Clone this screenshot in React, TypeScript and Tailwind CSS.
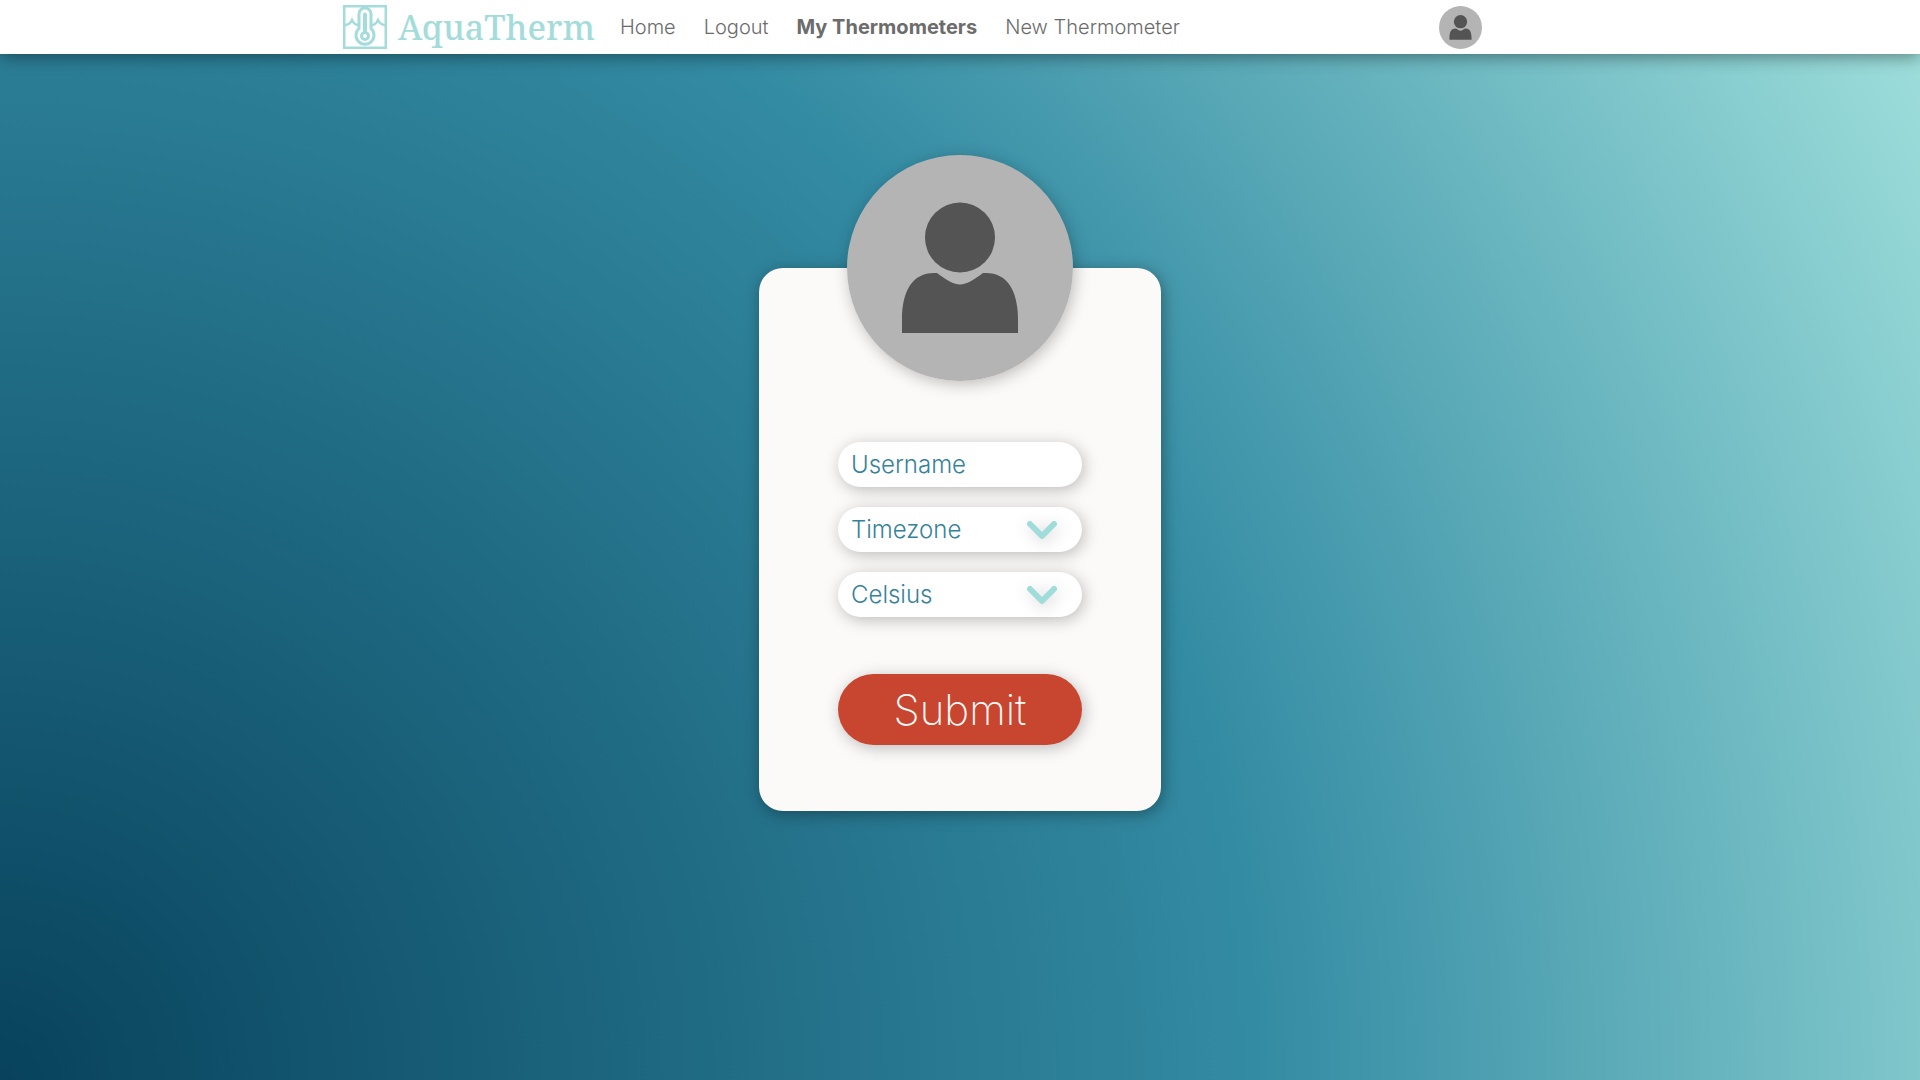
import React from 'react';

function Avatar({ className }: { className: string }) {
  return (
    <svg viewBox="0 0 226 226" className={className} role="img" aria-label="Profile picture">
      <circle cx="113" cy="113" r="113" fill="#b4b4b4" />
      <circle cx="113" cy="82.500" r="35" fill="#545454" />
      <path
        d="M55 178V165C55 135 66 118 87 118L90 118C98 124 106 129.500 113 129.500S128 124 136 118L139 118C160 118 171 135 171 165V178Z"
        fill="#545454"
      />
    </svg>
  );
}

function LogoMark() {
  return (
    <svg viewBox="0 0 44 44" className="h-11 w-11" fill="none" stroke="#a3dcda" strokeWidth="2.500" aria-hidden="true">
      <rect x="1.250" y="1.250" width="41.500" height="41.500" />
      <path d="M2 20C5 20 7.500 18 9 15C10.500 18 12.500 20 15 20M42 20C39 20 36.500 18 35 15C33.500 18 31.500 20 29 20" />
      <path d="M16 9a6 6 0 0 1 12 0V23.500a9 9 0 1 1-12 0Z" strokeWidth="3" />
      <path d="M22 9.500v17" strokeWidth="4" strokeLinecap="round" />
      <circle cx="22" cy="31" r="3.500" strokeWidth="3" />
    </svg>
  );
}

const links = [
  { label: 'Home', active: false },
  { label: 'Logout', active: false },
  { label: 'My Thermometers', active: true },
  { label: 'New Thermometer', active: false },
];

function Header() {
  return (
    <header className="relative flex h-[54px] justify-center bg-white shadow-[0_3px_16px_rgba(0,0,0,0.4)]">
      <div className="flex w-full max-w-[1234px] items-center pr-[95px]">
        <div className="flex flex-1 items-center">
          <a href="#" className="flex w-[253px] items-center gap-[11px] text-[#a3dcda]">
            <LogoMark />
            <span className="font-['Noto_Serif','DejaVu_Serif',serif] text-[34px] leading-none font-medium">AquaTherm</span>
          </a>
          <nav className="ml-6 flex items-center gap-7 text-xl text-[#6c6c6c]">
            {links.map((link) => (
              <a key={link.label} href="#" className={link.active ? 'font-bold' : 'font-light'}>
                {link.label}
              </a>
            ))}
          </nav>
        </div>
        <a href="#" className="shrink-0">
          <Avatar className="h-[43px] w-[43px]" />
        </a>
      </div>
    </header>
  );
}

const fieldClass =
  'h-[45px] w-full appearance-none rounded-full bg-white px-[13px] font-light text-2xl text-[#35829b] outline-none placeholder:text-[#35829b] placeholder:opacity-100 shadow-[2px_3px_16px_rgba(0,0,0,0.25)]';

function SelectField({ label, options }: { label: string; options: string[] }) {
  return (
    <div className="relative">
      <select aria-label={label} className={fieldClass}>
        {options.map((option) => (
          <option key={option}>{option}</option>
        ))}
      </select>
      <svg
        viewBox="0 0 30 20"
        className="pointer-events-none absolute top-[13px] right-[25px] h-5 w-[30px] drop-shadow-[2px_3px_8px_rgba(0,0,0,0.2)]"
        fill="none"
        stroke="#a0dcda"
        strokeWidth="6"
        strokeLinecap="round"
        strokeLinejoin="round"
        aria-hidden="true"
      >
        <path d="M3 4L15 16L27 4" />
      </svg>
    </div>
  );
}

export default function App() {
  return (
    <div className="flex min-h-screen flex-col bg-[radial-gradient(circle_at_bottom_left,#08425c_0%,#338ba3_57%,#a0e0dc_100%)] font-[Inter,sans-serif]">
      <Header />
      <main className="flex flex-1 justify-center px-4 pt-[214px] pb-16">
        <form
          className="flex w-full max-w-[402px] flex-col items-center self-start rounded-3xl bg-[#fbfaf8] px-4 pb-[66px] shadow-[2px_3px_16px_rgba(0,0,0,0.35)]"
          onSubmit={(event) => event.preventDefault()}
        >
          <div className="-mt-[113px] rounded-full shadow-[2px_3px_16px_rgba(0,0,0,0.25)]">
            <Avatar className="h-[226px] w-[226px]" />
          </div>
          <div className="mt-[61px] flex w-full max-w-[244px] flex-col gap-5">
            <input aria-label="Username" placeholder="Username" className={fieldClass} />
            <SelectField label="Timezone" options={['Timezone', 'UTC']} />
            <SelectField label="Temperature unit" options={['Celsius', 'Fahrenheit']} />
          </div>
          <button
            type="submit"
            className="mt-[57px] h-[71px] w-full max-w-[244px] rounded-full bg-[#c8452f] text-[42px] leading-none font-extralight text-[#fbfaf8] shadow-[2px_3px_16px_rgba(0,0,0,0.25)]"
          >
            Submit
          </button>
        </form>
      </main>
    </div>
  );
}
